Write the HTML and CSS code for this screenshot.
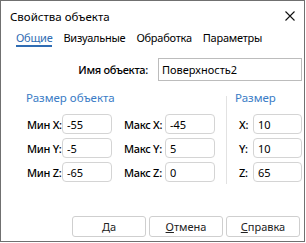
FILE: index.html
```html
<!DOCTYPE html>
<html lang="ru">
<head>
    <meta charset="UTF-8">
    <title>Свойства объекта</title>
    <link rel="stylesheet" href="styles.css">
</head>
<body>
    <div class="dialog">
        <div class="titlebar">
            <span class="title">Свойства объекта</span>
            <svg class="close" width="10" height="10" viewBox="0 0 10 10">
                <path d="M0.5 0.5 L9.5 9.5 M9.5 0.5 L0.5 9.5" stroke="#111" stroke-width="1.1" fill="none"/>
            </svg>
        </div>

        <div class="tabs">
            <span class="tab active">Общие</span>
            <span class="tab">Визуальные</span>
            <span class="tab">Обработка</span>
            <span class="tab">Параметры</span>
        </div>

        <div class="name-row">
            <label class="label name-label">Имя объекта:</label>
            <input class="field name-field" type="text" value="Поверхность2">
        </div>

        <div class="groups">
            <div class="group group-bounds">
                <div class="group-title">Размер объекта</div>
                <div class="rows">
                    <div class="row">
                        <label class="label min-label">Мин X:</label>
                        <input class="field" type="text" value="-55">
                        <label class="label max-label">Макс X:</label>
                        <input class="field" type="text" value="-45">
                    </div>
                    <div class="row">
                        <label class="label min-label">Мин Y:</label>
                        <input class="field" type="text" value="-5">
                        <label class="label max-label">Макс Y:</label>
                        <input class="field" type="text" value="5">
                    </div>
                    <div class="row">
                        <label class="label min-label">Мин Z:</label>
                        <input class="field" type="text" value="-65">
                        <label class="label max-label">Макс Z:</label>
                        <input class="field" type="text" value="0">
                    </div>
                </div>
            </div>

            <div class="separator"></div>

            <div class="group group-size">
                <div class="group-title">Размер</div>
                <div class="rows">
                    <div class="row">
                        <label class="label axis-label">X:</label>
                        <input class="field size-field" type="text" value="10">
                    </div>
                    <div class="row">
                        <label class="label axis-label">Y:</label>
                        <input class="field size-field" type="text" value="10">
                    </div>
                    <div class="row">
                        <label class="label axis-label">Z:</label>
                        <input class="field size-field" type="text" value="65">
                    </div>
                </div>
            </div>
        </div>

        <div class="buttons">
            <button class="btn">Да</button>
            <button class="btn"><u>О</u>тмена</button>
            <button class="btn"><u>С</u>правка</button>
        </div>
    </div>
</body>
</html>
```

FILE: styles.css
```css
* {
    margin: 0;
    padding: 0;
    box-sizing: border-box;
}

body {
    font-family: "Noto Sans", "Open Sans", sans-serif;
    font-size: 11px;
    color: #000;
    background: #fff;
}

.dialog {
    width: 305px;
    height: 242px;
    border: 1px solid #707070;
    background: #fff;
    display: flex;
    flex-direction: column;
}

.titlebar {
    height: 30px;
    display: flex;
    align-items: center;
    justify-content: space-between;
    padding: 0 9px;
}

.title {
    font-size: 11.5px;
}

/* вкладки */
.tabs {
    display: flex;
    gap: 11px;
    padding-left: 15px;
    letter-spacing: -0.25px;
}

.tab {
    line-height: 13px;
    padding-bottom: 1px;
    border-bottom: 2px solid transparent;
    color: #000;
}

.tab.active {
    color: #2f6cb3;
    border-bottom-color: #2f6cb3;
}

.name-row {
    display: flex;
    align-items: center;
    justify-content: flex-end;
    margin-top: 11px;
    padding-right: 2px;
}

.label {
    font-weight: 500;
    letter-spacing: -0.3px;
    white-space: nowrap;
}

.name-label {
    margin-right: 10px;
}

.field {
    font-family: inherit;
    font-size: 11px;
    color: #000;
    height: 20px;
    width: 50px;
    padding: 0 4px;
    border: 1px solid #d4d4d4;
    border-radius: 4px;
    background: #fff;
    outline: none;
}

.name-field {
    width: 144px;
    height: 23px;
    border-color: #bcbcbc;
    border-radius: 0;
    padding: 0 3px;
}

.groups {
    display: flex;
    margin-top: 10px;
}

.group-title {
    color: #3a7cc6;
    font-size: 11.5px;
    line-height: 14px;
    margin-bottom: 9px;
}

.group-bounds {
    padding-left: 25px;
}

.rows {
    display: flex;
    flex-direction: column;
    gap: 4px;
}

.row {
    display: flex;
    align-items: center;
}

.min-label {
    width: 36px;
    padding-left: 1px;
}

.max-label {
    width: 41px;
    margin-left: 12px;
}

.separator {
    width: 1px;
    background: #e2e2e2;
    margin: 5px 0 0 11px;
    height: 88px;
}

.group-size {
    padding-left: 8px;
}

.axis-label {
    width: 18px;
    padding-left: 4px;
}

.size-field {
    width: 49px;
}

.buttons {
    margin-top: auto;
    display: flex;
    justify-content: flex-end;
    gap: 3px;
    padding: 0 4px 4px 0;
}

.btn {
    width: 74px;
    height: 21px;
    font-family: inherit;
    font-size: 11px;
    color: #222;
    background: #fff;
    border: 1px solid #cfcfcf;
    border-radius: 3px;
}

.btn u {
    text-decoration-thickness: 1px;
}
```
